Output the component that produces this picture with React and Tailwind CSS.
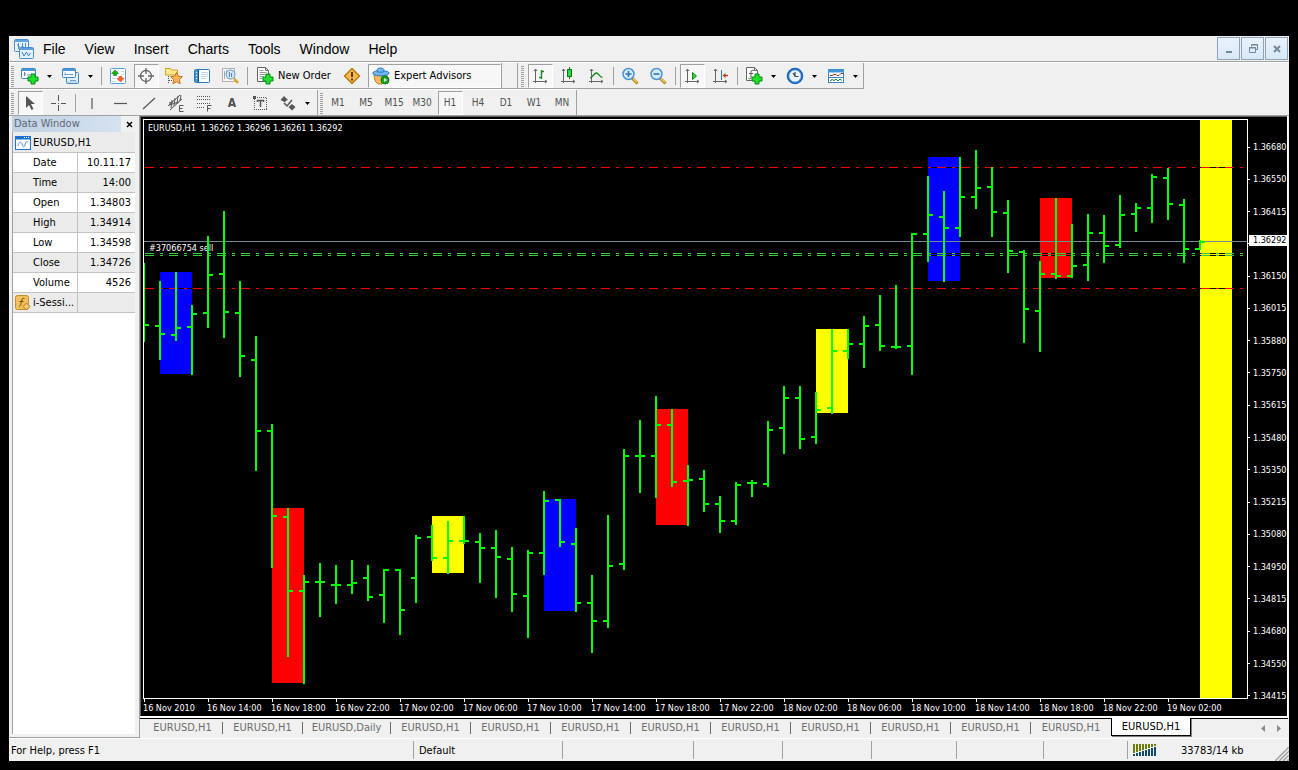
import React from "react";

// [high, low, open, close] as y positions, one bar every 16px
const BARS = [
  [263, 342, null, 324], [281, 360, 325, 333], [272, 341, 334, 327], [305, 375, 326, 313],
  [236, 328, 312, 274], [211, 338, 273, 311], [281, 377, 312, 355], [336, 471, 359, 430],
  [424, 568, 430, 515], [508, 657, 516, 590], [575, 684, 590, 581], [563, 617, 581, 581],
  [565, 604, 584, 584], [560, 594, 584, 582], [565, 601, 577, 596], [569, 623, 594, 569],
  [569, 635, 569, 609], [535, 603, 577, 537], [525, 561, 536, 557], [521, 574, 557, 540],
  [516, 544, 540, 540], [533, 583, 541, 547], [530, 598, 547, 556], [547, 612, 558, 593],
  [550, 638, 595, 552], [491, 575, 552, 500], [499, 547, 499, 541], [528, 612, 543, 602],
  [575, 653, 602, 620], [515, 628, 620, 565], [449, 570, 563, 455], [420, 493, 455, 455],
  [396, 498, 455, 424], [409, 487, 424, 481], [465, 526, 480, 479], [470, 512, 478, 503],
  [496, 533, 503, 520], [482, 525, 520, 484], [480, 497, 482, 482], [421, 487, 483, 429],
  [386, 454, 427, 397], [386, 449, 397, 438], [392, 444, 436, 409], [329, 414, 407, 350],
  [329, 359, 350, 343], [316, 368, 343, 325], [295, 351, 324, 345], [285, 349, 346, 346],
  [233, 375, 345, 233], [176, 262, 233, 214], [191, 282, 216, 227], [157, 237, 227, 196],
  [150, 209, 196, 187], [167, 237, 186, 211], [200, 273, 212, 250], [250, 343, 251, 308],
  [261, 352, 310, 273], [198, 279, 273, 275], [224, 278, 275, 265], [214, 281, 264, 232],
  [215, 263, 232, 245], [195, 248, 244, 214], [203, 232, 213, 207], [174, 223, 207, 176],
  [168, 220, 177, 203], [199, 263, 204, 248], [240, 250, 248, 241],
];

// [first bar, top, bottom, colour]
const SESSIONS = [
  [1, 272, 374, "#0000ff"],
  [8, 508, 683, "#ff0000"],
  [18, 516, 573, "#ffff00"],
  [25, 499, 611, "#0000ff"],
  [32, 409, 525, "#ff0000"],
  [42, 329, 413, "#ffff00"],
  [49, 157, 281, "#0000ff"],
  [56, 198, 278, "#ff0000"],
  [66, 120, 5000, "#ffff00"],
];

const LEVELS = [
  [167, "#ff0000"],
  [253, "#32cd32"],
  [255, "#32cd32"],
  [288, "#ff0000"],
];

// the empty row sits under the current price tag
const PRICES = [
  "1.36680", "1.36550", "1.36415", "", "1.36150", "1.36015", "1.35880", "1.35750", "1.35615",
  "1.35480", "1.35350", "1.35215", "1.35080", "1.34950", "1.34815", "1.34680", "1.34550", "1.34415",
];

const TIMES = [
  "16 Nov 2010", "16 Nov 14:00", "16 Nov 18:00", "16 Nov 22:00", "17 Nov 02:00", "17 Nov 06:00",
  "17 Nov 10:00", "17 Nov 14:00", "17 Nov 18:00", "17 Nov 22:00", "18 Nov 02:00", "18 Nov 06:00",
  "18 Nov 10:00", "18 Nov 14:00", "18 Nov 18:00", "18 Nov 22:00", "19 Nov 02:00",
];

const DATA = [
  ["Date", "10.11.17"],
  ["Time", "14:00"],
  ["Open", "1.34803"],
  ["High", "1.34914"],
  ["Low", "1.34598"],
  ["Close", "1.34726"],
  ["Volume", "4526"],
];

const TABS = [
  "EURUSD,H1", "EURUSD,H1", "EURUSD,Daily", "EURUSD,H1", "EURUSD,H1", "EURUSD,H1", "EURUSD,H1",
  "EURUSD,H1", "EURUSD,H1", "EURUSD,H1", "EURUSD,H1", "EURUSD,H1", "EURUSD,H1",
];

const PERIODS = ["M1", "M5", "M15", "M30", "H1", "H4", "D1", "W1", "MN"];

/* ---------- icons ---------- */

const Icon = ({ children, size = 18 }) => (
  <svg width={size} height={size} viewBox={`0 0 ${size} ${size}`} fill="none" className="shrink-0" aria-hidden="true">
    {children}
  </svg>
);

const Plus = ({ x, y }) => (
  <path
    transform={`translate(${x} ${y})`}
    d="M3.5.5h4v3h3v4h-3v3h-4v-3h-3v-4h3z"
    fill="#1fe02f"
    stroke="#078a12"
  />
);

const AppIcon = () => (
  <Icon size={20}>
    <rect x="0.5" y="0.5" width="14" height="12" rx="1" fill="#e9f5fd" stroke="#4a90c8" />
    <path d="M1 2h13" stroke="#64a6dc" strokeWidth="2" />
    <path d="M4.500 4v6M3 6h1.500M4.500 8h2M8.500 4v6M7 8h3M11.500 4v5" stroke="#4a8fcc" />
    <rect x="5.500" y="8.500" width="14" height="11" rx="1" fill="#e3f1fc" stroke="#4a90c8" />
    <path d="M6 10h13" stroke="#5d9fd8" strokeWidth="2" />
    <path d="M8 13l2 4 2.500-4 2 4 2-3" stroke="#3c83c8" />
  </Icon>
);

const NewChartIcon = () => (
  <Icon>
    <rect x="0.5" y="1.500" width="14" height="10" rx="1" fill="#f4faff" stroke="#3b86c6" />
    <path d="M1 3h13" stroke="#4f97d3" strokeWidth="2" />
    <path d="M3.500 5v4M3 7h2M6 8h3" stroke="#6b8499" />
    <Plus x={6.500} y={6.500} />
  </Icon>
);

const ProfilesIcon = () => (
  <Icon>
    <rect x="4.500" y="5.500" width="12" height="11" rx="1" fill="#e2f0fb" stroke="#3b86c6" />
    <path d="M5 15h11" stroke="#9fc6e8" />
    <rect x="0.500" y="1.500" width="13" height="9" rx="1" fill="#f4faff" stroke="#3b86c6" />
    <path d="M1 3h12" stroke="#4f97d3" strokeWidth="2" />
    <path d="M3 5.500v3M3 7.500h8M8 13.500h6" stroke="#6f9cc4" />
  </Icon>
);

const MarketIcon = () => (
  <Icon>
    <rect x="1.500" y="1.500" width="15" height="15" rx="1" fill="#fff" stroke="#5aa0d8" />
    <path d="M12 4.500h3M12 7.500h3M3 11.500h4M3 14.500h4" stroke="#cfd8e0" />
    <path d="M6 3l3.500 3.500H7.500v2h-3v-2h-2z" fill="#12b512" stroke="#078007" strokeWidth=".6" />
    <path d="M11.500 15l3.500-3.500h-2v-2h-3v2H8z" fill="#ff6a2a" stroke="#d63a0a" strokeWidth=".6" />
  </Icon>
);

const TargetIcon = () => (
  <Icon>
    <circle cx="9" cy="9" r="5.500" stroke="#666" strokeWidth="1.300" />
    <path d="M9 1v6M9 11v6M1 9h6M11 9h6" stroke="#666" strokeWidth="1.300" />
  </Icon>
);

const NavigatorIcon = () => (
  <Icon>
    <path d="M.5 3.500v-2h5l1 1.500h6v5h-12z" fill="#ffe98a" stroke="#c9a227" />
    <path d="M3.500 9v8M4 13.500h3" stroke="#555" strokeDasharray="1 1" />
    <path d="M11.500 5.500l1.900 3.700 4 .5-3 2.900.8 4.100-3.700-2-3.600 2 .7-4.100-3-2.900 4.100-.5z" fill="#fbb254" stroke="#c2761c" />
  </Icon>
);

const TerminalIcon = () => (
  <Icon>
    <rect x="1.500" y="2.500" width="15" height="13" rx="1" fill="#fff" stroke="#2f78b7" />
    <rect x="2" y="3" width="3" height="12" fill="#4394d6" />
    <path d="M3 5.500h1M3 8.500h1M3 11.500h1" stroke="#fff" />
    <path d="M8 5.500h7M8 7.500h7M8 9.500h7M8 11.500h5" stroke="#c2d8ec" />
    <path d="M5.500 3v12" stroke="#1d4f7c" />
  </Icon>
);

const TesterIcon = () => (
  <Icon>
    <rect x="1.500" y="1.500" width="12" height="13" fill="#f7f7f7" stroke="#b0b0b0" />
    <path d="M3.500 4v8M5.500 3v5M7 12V4M11.500 3v6" stroke="#9ab" />
    <circle cx="9.500" cy="7.500" r="4.500" fill="#cfe6fa" fillOpacity=".8" stroke="#6696c4" />
    <path d="M8.500 5v5M10.500 6v4" stroke="#5c86ad" />
    <path d="M13 11.500l4 4.500" stroke="#dfa126" strokeWidth="2.500" />
  </Icon>
);

const OrderIcon = () => (
  <Icon>
    <path d="M1.500.5h8l3 3v11h-11z" fill="#fff" stroke="#666" />
    <path d="M9.500.5v3h3" stroke="#666" />
    <path d="M3.500 3.500h4M3.500 5.500h7M3.500 7.500h7M3.500 9.500h4M3.500 11.500h3" stroke="#999" />
    <Plus x={6.500} y={6.500} />
  </Icon>
);

const WarnIcon = () => (
  <Icon>
    <path d="M9 1.500l7.500 7.500-7.500 7.500-7.500-7.500z" fill="#f4b84e" stroke="#bd7b12" strokeLinejoin="round" strokeWidth="1.500" />
    <path d="M9 5v5M9 11.500v2" stroke="#5d3a00" strokeWidth="2" />
  </Icon>
);

const ExpertIcon = () => (
  <Icon>
    <path d="M2 8h13l-1 6-4 3H6l-3-3z" fill="#f5b860" stroke="#bd8430" />
    <path d="M1 7c-1-2 2-3 4-3 0-2 1-3 3.500-3S12 2 12 4c3 0 6 1 4.500 3-3 2.500-12 2.500-15.500 0z" fill="#6fb7ef" stroke="#2b78b8" />
    <path d="M5 4.500c2 1 5 1 7 0" stroke="#2b78b8" />
    <circle cx="13" cy="13" r="4" fill="#14a51c" stroke="#0b7a12" />
    <path d="M12 11l3 2-3 2z" fill="#fff" />
  </Icon>
);

const Axes = () => <path d="M4.500 2v14M2 14.500h14M3 4l1.500-2L6 4M14 13l2 1.500-2 1.500" stroke="#666" />;

const BarsIcon = () => (
  <Icon>
    <Axes />
    <path d="M10.500 3v9M11 4.500h2M8 10.500h2" stroke="#178a1e" strokeWidth="1.400" />
  </Icon>
);

const CandlesIcon = () => (
  <Icon>
    <Axes />
    <path d="M10.500 0v12" stroke="#0b7a12" />
    <rect x="8.500" y="2.500" width="4" height="7" fill="#35d145" stroke="#0b7a12" />
  </Icon>
);

const LineIcon = () => (
  <Icon>
    <Axes />
    <path d="M3 11c3-1 4-5 6.500-5 2 0 3 4 6 4.500" stroke="#178a1e" strokeWidth="1.300" />
  </Icon>
);

const ZoomIcon = ({ plus }) => (
  <Icon>
    <path d="M11 11l5.500 5.500" stroke="#b17f1d" strokeWidth="3" />
    <path d="M12 11.500l4 4" stroke="#f2cf5e" strokeWidth="1.500" />
    <circle cx="7.500" cy="7" r="5.500" fill="#d3eafc" stroke="#4b93d4" strokeWidth="1.500" />
    <path d={plus ? "M4.500 7h6M7.500 4v6" : "M4.500 7h6"} stroke="#2c74b5" strokeWidth="1.600" />
  </Icon>
);

const ScrollIcon = () => (
  <Icon>
    <Axes />
    <path d="M9.500 5.500l4 3.500-4 3.500z" fill="#3ad14a" stroke="#0b8a15" />
  </Icon>
);

const ShiftIcon = () => (
  <Icon>
    <Axes />
    <path d="M10.500 3v10" stroke="#3778b0" />
    <path d="M17 8.500h-3" stroke="#b8431a" strokeWidth="1.500" />
    <path d="M14.500 6l-3 2.500 3 2.500z" fill="#b8431a" />
  </Icon>
);

const IndicatorIcon = () => (
  <Icon>
    <path d="M1.500.5h8l3 3v10h-11z" fill="#fff" stroke="#666" />
    <path d="M9.500.5v3h3" stroke="#666" />
    <path d="M9 3.500c-2-1-3 0-3 2v5c0 1-1 2-2.500 1M4 6.500h4" stroke="#555" />
    <Plus x={6.500} y={6.500} />
  </Icon>
);

const ClockIcon = () => (
  <Icon>
    <circle cx="9" cy="9" r="7.200" fill="#e8f4fe" stroke="#1c64b8" strokeWidth="2.200" />
    <circle cx="9" cy="9" r="6" stroke="#69aeea" />
    <path d="M9 5v4.500h3.500M7 6l2 3" stroke="#444" strokeWidth="1.200" />
  </Icon>
);

const TemplateIcon = () => (
  <Icon>
    <rect x="1.500" y="2.500" width="15" height="13" fill="#fff" stroke="#3b86c6" />
    <path d="M1 4h16" stroke="#4394d6" strokeWidth="3" />
    <path d="M2 10.500h14" stroke="#3b86c6" />
    <path d="M3 8.500h2l2-1h2l1 1h2l2-2h2" stroke="#9c2f1c" />
    <path d="M3 14l2-1.500 2 1 2-1.500 2 2 2-2 2 1.500" stroke="#1a8a22" />
  </Icon>
);

const CursorIcon = () => (
  <Icon>
    <path d="M5 2v12l3-3 2.500 5 2-1-2.500-5h4z" fill="#555" />
  </Icon>
);

const CrossIcon = () => (
  <Icon>
    <path d="M9.500 1v6M9.500 11v6M2 9.500h5M12 9.500h5M9 9.500h1" stroke="#555" shapeRendering="crispEdges" />
  </Icon>
);

const StrokeIcon = ({ d }) => (
  <Icon>
    <path d={d} stroke="#555" strokeWidth="1.200" />
  </Icon>
);

const ChannelIcon = () => (
  <Icon>
    <path d="M1 12L13 1M3 16L15 5M2 9l4-1M5 6l-1 8M8 4L7 12M11 2l-1 8M2 11l10-3M14 1l-1 6" stroke="#555" />
    <path d="M16.500 11.500h-4v6h4M12.500 14.500h3" stroke="#555" />
  </Icon>
);

const FiboIcon = () => (
  <Icon>
    <path d="M2 2.500h14M2 5.500h14M2 9.500h14M2 13.500h8" stroke="#555" strokeDasharray="1 1" shapeRendering="crispEdges" />
    <path d="M16.500 11.500h-4v6M12.500 14.500h3" stroke="#555" />
  </Icon>
);

const LabelFrame = () => (
  <Icon>
    <rect x="3.500" y="3.500" width="12" height="12" stroke="#555" strokeDasharray="1 1" shapeRendering="crispEdges" />
    <path d="M2 2h3v3H2z" fill="#555" />
    <path d="M6 6.500h7M9.500 7v6M6.500 6v2M12.500 6v2" stroke="#555" strokeWidth="1.500" />
  </Icon>
);

const ArrowsIcon = () => (
  <Icon>
    <path d="M5 2l4 4-2.500 1v1.500l-2-1L1.500 6z" fill="#555" />
    <path d="M5 9l3 3 5-6" stroke="#555" strokeWidth="1.500" />
    <path d="M13 10l3.500 3-3.500 3.500L9.500 13z" fill="#555" />
  </Icon>
);

const ChartMini = () => (
  <Icon size={16}>
    <rect x="0.500" y="1.500" width="15" height="13" fill="#fff" stroke="#1d6fd0" />
    <path d="M0 3h16" stroke="#1d6fd0" strokeWidth="3" />
    <path d="M9 2.500h1M11 2.500h1M13 2.500h1" stroke="#fff" />
    <path d="M3 11c1-4 3-5 4-2s2 4 3 1 1-4 3-3" stroke="#4b8fd0" />
  </Icon>
);

const IndicatorMini = () => (
  <Icon size={16}>
    <rect x="0.500" y="0.500" width="13" height="14" rx="2" fill="#f0c05a" stroke="#c48f28" />
    <path d="M9.500 3.500c-2-.8-2.500.5-3 3s-.8 5-2.500 4.500M4.500 6.500h4" stroke="#6b4a0a" />
    <path d="M11.500 8l3.500 3.500-3.500 3.500L8 11.500z" fill="#f7c873" stroke="#b9791a" />
  </Icon>
);

/* ---------- toolbar parts ---------- */

const Grip = ({ className }) => (
  <div className={`flex justify-center items-center shrink-0 ${className}`}>
    <svg width="3" height="21" aria-hidden="true">
      <path d="M1.500 0v21" stroke="#a0a0a0" strokeWidth="3" strokeDasharray="1 1" />
    </svg>
  </div>
);

const Sep = () => (
  <div className="w-[6px] shrink-0 flex justify-center py-[3px]">
    <div className="w-px bg-[#a0a0a0]" />
  </div>
);

const Tool = ({ label, pressed, children }) => (
  <button type="button" aria-label={label} aria-pressed={pressed} className="w-7 shrink-0 flex justify-center items-stretch text-[10px] text-[#505050]">
    <span
      className={
        pressed
          ? "w-[25px] flex items-center justify-center border border-t-[#a0a0a0] border-l-[#a0a0a0] border-r-white border-b-white bg-[#f7f7f7]"
          : "w-[25px] flex items-center justify-center"
      }
    >
      {children}
    </span>
  </button>
);

const Drop = ({ label }) => (
  <button type="button" aria-label={label} className="w-[13px] shrink-0 flex items-center justify-center pr-[2px]">
    <svg width="5" height="3" aria-hidden="true"><path d="M0 0h5L2.500 3z" fill="#000" /></svg>
  </button>
);

const MenuBar = () => (
  <header className="h-[26px] shrink-0 flex items-center border-b border-[#a0a0a0] pl-[5px] pr-px">
    <AppIcon />
    <nav className="flex gap-[19px] pl-[9px] font-['Liberation_Sans',sans-serif] text-sm leading-5">
      {["File", "View", "Insert", "Charts", "Tools", "Window", "Help"].map((item) => (
        <button type="button" key={item}>{item}</button>
      ))}
    </nav>
    <div className="ml-auto flex gap-px">
      {[
        ["Minimize", "M8 14h6"],
        ["Restore", "M9.500 8.500v-2h6v5h-2M7.500 9.500h6v5h-6zM7 10h7M9 7h7"],
        ["Close", "M8 8l6 6M14 8l-6 6"],
      ].map(([label, d]) => (
        <button
          type="button"
          key={label}
          aria-label={label}
          className="w-[23px] h-[23px] border border-[#8fa3b8] bg-linear-to-b from-[#eaf3fc] to-[#d9e8f7] flex items-center justify-center"
        >
          <svg width="21" height="21" fill="none" stroke="#75879a" strokeWidth={label === "Restore" ? 1 : 2} aria-hidden="true">
            <path d={d} />
          </svg>
        </button>
      ))}
    </div>
  </header>
);

const MainToolbar = () => (
  <div className="h-[27px] shrink-0 border-t border-white flex">
    <div className="flex border-b border-r border-[#a0a0a0]">
      <div className="flex w-[493px] shrink-0 border-r border-[#a0a0a0] pt-px">
        <Grip className="w-[7px]" />
        <Tool label="New chart"><NewChartIcon /></Tool>
        <Drop label="New chart menu" />
        <Tool label="Profiles"><ProfilesIcon /></Tool>
        <Drop label="Profiles menu" />
        <Sep />
        <Tool label="Market Watch"><MarketIcon /></Tool>
        <Tool label="Data Window" pressed><TargetIcon /></Tool>
        <Tool label="Navigator"><NavigatorIcon /></Tool>
        <Tool label="Terminal"><TerminalIcon /></Tool>
        <Tool label="Strategy Tester"><TesterIcon /></Tool>
        <Sep />
        <button type="button" className="w-[88px] shrink-0 flex items-center gap-1 pl-[6px] whitespace-nowrap">
          <OrderIcon />New Order
        </button>
        <Tool label="MetaEditor"><WarnIcon /></Tool>
        <button
          type="button"
          aria-pressed="true"
          className="ml-[2px] flex-1 flex items-center gap-1 pl-[3px] whitespace-nowrap border border-t-[#a0a0a0] border-l-[#a0a0a0] border-r-white border-b-white bg-[#f7f7f7]"
        >
          <ExpertIcon />Expert Advisors
        </button>
      </div>
      <div className="w-4 shrink-0 border-r border-[#a0a0a0]" />
      <div className="flex pt-px">
        <Grip className="w-2" />
        <Tool label="Bar Chart" pressed><BarsIcon /></Tool>
        <Tool label="Candlesticks"><CandlesIcon /></Tool>
        <Tool label="Line Chart"><LineIcon /></Tool>
        <Sep />
        <Tool label="Zoom In"><ZoomIcon plus /></Tool>
        <Tool label="Zoom Out"><ZoomIcon /></Tool>
        <Sep />
        <Tool label="Auto Scroll" pressed><ScrollIcon /></Tool>
        <Tool label="Chart Shift"><ShiftIcon /></Tool>
        <Sep />
        <Tool label="Indicators"><IndicatorIcon /></Tool>
        <Drop label="Indicators menu" />
        <Tool label="Periods"><ClockIcon /></Tool>
        <Drop label="Periods menu" />
        <Tool label="Templates"><TemplateIcon /></Tool>
        <Drop label="Templates menu" />
      </div>
    </div>
  </div>
);

const LineToolbar = () => (
  <div className="h-[27px] shrink-0 flex border-b border-[#a0a0a0]">
    <div className="flex border-t border-t-white">
      <div className="w-[309px] shrink-0 flex border-r border-[#a0a0a0] pt-px">
        <Grip className="w-[7px]" />
        <Tool label="Cursor" pressed><CursorIcon /></Tool>
        <Tool label="Crosshair"><CrossIcon /></Tool>
        <Sep />
        <Tool label="Vertical Line"><StrokeIcon d="M9 4v11" /></Tool>
        <Tool label="Horizontal Line"><StrokeIcon d="M3 9.500h13" /></Tool>
        <Tool label="Trendline"><StrokeIcon d="M4 15L16 4" /></Tool>
        <Tool label="Equidistant Channel"><ChannelIcon /></Tool>
        <Tool label="Fibonacci Retracement"><FiboIcon /></Tool>
        <Tool label="Text"><span className="text-xs font-bold">A</span></Tool>
        <Tool label="Text Label"><LabelFrame /></Tool>
        <Tool label="Arrows"><ArrowsIcon /></Tool>
        <Drop label="Arrows menu" />
      </div>
      <div className="flex border-r border-[#a0a0a0] pt-px">
        <Grip className="w-[6px]" />
        {PERIODS.map((p) => (
          <Tool key={p} label={p} pressed={p === "H1"}>{p}</Tool>
        ))}
      </div>
    </div>
  </div>
);

/* ---------- main area ---------- */

const DataWindow = () => (
  <aside className="w-[130px] shrink-0 flex flex-col pl-[3px] pr-[2px] border-b border-[#a0a0a0]">
    <div className="h-4 flex items-center justify-between">
      <h2 className="w-[110px] h-4 pl-[2px] leading-4 text-[#5d6873] bg-linear-to-r from-[#bfd0e2] to-[#d5e2f0]">Data Window</h2>
      <button type="button" aria-label="Close Data Window" className="w-4 h-4 flex items-center justify-center">
        <svg width="7" height="7" stroke="#000" strokeWidth="1.500" aria-hidden="true">
          <path d="M1 1l5 5M6 1L1 6" />
        </svg>
      </button>
    </div>
    <div className="flex-1 bg-white border-l border-r-2 border-l-[#a0a0a0] border-r-[#f0f0f0] mb-[3px]">
      <table className="w-full table-fixed border-collapse">
        <colgroup>
          <col className="w-16" />
          <col />
        </colgroup>
        <tbody>
          <tr className="h-5 bg-[#ebebeb] border-b border-[#c3c3c3]">
            <th colSpan={2} className="p-0 pt-[2px] font-normal">
              <div className="flex items-center gap-[2px] pl-[2px]"><ChartMini />EURUSD,H1</div>
            </th>
          </tr>
          {DATA.map(([name, value], i) => (
            <tr key={name} className={i % 2 ? "h-5 bg-[#ebebeb] border-b border-[#c3c3c3]" : "h-5 border-b border-[#c3c3c3]"}>
              <th scope="row" className="p-0 pt-[2px] pl-5 text-left font-normal border-r border-[#c3c3c3]">{name}</th>
              <td className="p-0 pt-[2px] pr-1 text-right">{value}</td>
            </tr>
          ))}
          <tr className="h-5 bg-[#ebebeb] border-b border-[#c3c3c3]">
            <th scope="row" className="p-0 pt-[2px] font-normal border-r border-[#c3c3c3]">
              <div className="flex items-center gap-[2px] pl-[2px] whitespace-nowrap"><IndicatorMini />i-Sessi...</div>
            </th>
            <td />
          </tr>
        </tbody>
      </table>
    </div>
  </aside>
);

const Plot = () => (
  <svg className="flex-1 min-h-0 w-full border border-white" shapeRendering="crispEdges" role="img" aria-label="EURUSD,H1 bar chart">
    <g transform="translate(0 -120)">
      {SESSIONS.map(([bar, top, bottom, fill]) => (
        <rect key={bar} x={bar * 16} y={top} width="32" height={bottom - top} fill={fill} />
      ))}
      {LEVELS.map(([y, stroke]) => (
        <g key={y}>
          <path d={`M1 ${y}.5H1100`} stroke="#000" />
          <path d={`M1 ${y}.5H1100`} stroke={stroke} strokeDasharray="9 6 3 6" />
        </g>
      ))}
      <line x1="0" x2="100%" y1="241.5" y2="241.5" stroke="#778899" />
      <g fill="#fff" className="text-[9px]">
        <text x="4" y="131">EURUSD,H1 {"\u00a0"}1.36262 1.36296 1.36261 1.36292</text>
        <text x="5" y="251">#37066754 sell</text>
      </g>
      <g fill="#00ff00">
        {BARS.map(([high, low, open, close], i) => (
          <g key={i}>
            <rect x={i * 16 - 1} y={high} width="2" height={low - high} />
            {open && <rect x={i * 16 - 5} y={open} width="4" height="2" />}
            <rect x={i * 16 + 1} y={close} width="4" height="2" />
          </g>
        ))}
      </g>
    </g>
  </svg>
);

const Chart = () => (
  <div className="flex-1 flex min-h-[400px] bg-black text-white text-[9px] leading-3 pt-[2px] pl-[2px] border-t border-l border-[#606060] whitespace-nowrap">
    <div className="flex-1 min-w-0 flex flex-col overflow-hidden">
      <Plot />
      <div className="h-[17px] flex">
        {TIMES.map((t) => (
          <div key={t} className="w-16 shrink-0">
            <div className="ml-px w-px h-[3px] bg-white" />
            {t}
          </div>
        ))}
      </div>
    </div>
    <div className="relative w-[39px] shrink-0 flex flex-col justify-between pt-[22px] pb-[14px]">
      {PRICES.map((p, i) => (
        <div key={i} className="h-3 flex items-center gap-[3px]">
          <span className="w-[2px] h-px bg-white" />
          {p}
        </div>
      ))}
      <div className="absolute top-[116px] left-px right-0 h-[11px] pl-1 leading-[11px] bg-white text-black">1.36292</div>
    </div>
  </div>
);

const ChartTabs = () => (
  <nav className="h-[19px] shrink-0 flex text-[#6d6d6d] whitespace-nowrap">
    <div className="w-[3px] border-t border-black" />
    {TABS.map((tab, i) => {
      const active = i === TABS.length - 1;
      return (
        <button
          type="button"
          key={i}
          className={
            active
              ? "w-20 shrink-0 mb-px pt-px bg-white text-black border border-t-0 border-black shadow-[1px_1px_0_#808080]"
              : tab === "EURUSD,Daily"
                ? "w-[88px] shrink-0 border-t border-black flex items-center"
                : "w-20 shrink-0 border-t border-black flex items-center"
          }
        >
          {active ? tab : <span className={i === TABS.length - 2 ? "flex-1" : "flex-1 border-r border-[#6d6d6d] leading-3"}>{tab}</span>}
        </button>
      );
    })}
    <div className="flex-1 border-t border-black flex items-center justify-end gap-3 pr-[7px]">
      <button type="button" aria-label="Scroll tabs left">
        <svg width="4" height="7" aria-hidden="true"><path d="M4 0v7L0 3.500z" fill="#8a8a8a" /></svg>
      </button>
      <button type="button" aria-label="Scroll tabs right">
        <svg width="4" height="7" aria-hidden="true"><path d="M0 0v7l4-3.500z" fill="#8a8a8a" /></svg>
      </button>
    </div>
  </nav>
);

const StatusBar = () => (
  <footer className="h-[23px] shrink-0 flex items-stretch border-t border-white leading-6 whitespace-nowrap">
    <div className="flex-1 pl-[2px]">For Help, press F1</div>
    <div className="w-[149px] my-[2px] pl-[5px] border-l border-[#a0a0a0] leading-5">Default</div>
    <div className="w-[131px] my-[2px] border-l border-[#a0a0a0]" />
    <div className="w-[89px] my-[2px] border-l border-[#a0a0a0]" />
    <div className="w-[89px] my-[2px] border-l border-[#a0a0a0]" />
    <div className="w-[85px] my-[2px] border-l border-[#a0a0a0]" />
    <div className="w-[87px] my-[2px] border-l border-[#a0a0a0]" />
    <div className="w-[84px] my-[2px] border-l border-[#a0a0a0]" />
    <div className="w-[162px] my-[2px] pl-[5px] flex items-center gap-6 border-l border-[#a0a0a0] leading-5">
      <svg width="24" height="12" shapeRendering="crispEdges" aria-hidden="true">
        {[10, 9, 8, 7, 6, 5, 4, 3].map((h, i) => (
          <g key={i}>
            <rect x={i * 3} y="0" width="2" height={h - 1} fill="#6b7d0a" />
            <rect x={i * 3} y={h} width="2" height={12 - h} fill="#0d4a68" />
          </g>
        ))}
      </svg>
      <span className="pt-px">33783/14 kb</span>
      <svg width="14" height="14" className="ml-auto self-end -mb-[2px]" aria-hidden="true">
        <path d="M0 14L14 0M4 14L14 4M8 14l6-6M12 14l2-2" stroke="#a0a0a0" strokeWidth="1.500" />
      </svg>
    </div>
  </footer>
);

const App = () => {
  return (
    <div className="min-h-screen bg-black pt-9 px-[9px] pb-[9px] flex flex-col font-['DejaVu_Sans_Condensed','Noto_Sans',sans-serif] text-[11px] leading-4 text-black">
      <div className="flex-1 flex flex-col bg-[#f0f0f0]">
        <MenuBar />
        <MainToolbar />
        <LineToolbar />
        <main className="flex-1 flex">
          <DataWindow />
          <div className="flex-1 min-w-0 flex flex-col border-l border-[#a0a0a0] pr-px">
            <div className="flex-1 flex border-r border-b-2 border-white">
              <Chart />
            </div>
            <ChartTabs />
            <div className="h-px shrink-0" />
          </div>
        </main>
        <StatusBar />
      </div>
    </div>
  );
};

export default App;
